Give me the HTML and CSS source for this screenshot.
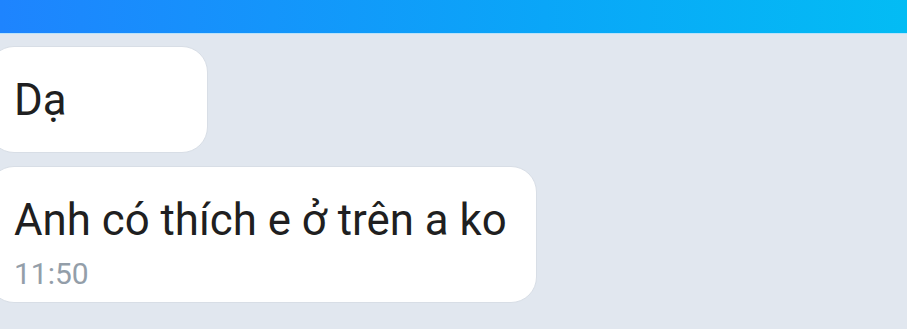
FILE: index.html
```html
<!DOCTYPE html>
<html lang="vi">

<head>
    <meta charset="UTF-8">
    <meta name="viewport" content="width=device-width, initial-scale=1.0">
    <title>Chat</title>
    <link rel="stylesheet" href="styles.css">
</head>

<body>
    <div class="topbar"></div>
    <div class="chat">
        <div class="bubble short">
            <div class="msg">Dạ</div>
        </div>
        <div class="bubble">
            <div class="msg">Anh có thích e ở trên a ko</div>
            <div class="time">11:50</div>
        </div>
    </div>
</body>

</html>
```

FILE: styles.css
```css
body {
    margin: 0;
    font-family: Roboto, "Noto Sans", Arial, sans-serif;
    background-color: #e1e7ef;
    overflow: hidden;
}

.topbar {
    height: 33px;
    background: linear-gradient(to right, #1e84fe, #0aa6f8 60%, #03bcf4);
    border-bottom: 1px solid #b9e2fa;
}

.chat {
    display: flex;
    flex-direction: column;
    align-items: flex-start;
    gap: 13px;
    padding-top: 12px;
}

.bubble {
    margin-left: -12px;
    padding: 27px 29px 10px 25px;
    background: #fff;
    border: 1px solid #d8dee6;
    border-radius: 26px;
}

.bubble.short {
    min-width: 164px;
    padding-bottom: 26px;
    padding-top: 27px;
}

.msg {
    font-size: 43.8px;
    line-height: 52px;
    color: #1f1f21;
}

.time {
    margin-top: 10px;
    font-size: 30px;
    line-height: 36px;
    color: #939ea9;
}
```
